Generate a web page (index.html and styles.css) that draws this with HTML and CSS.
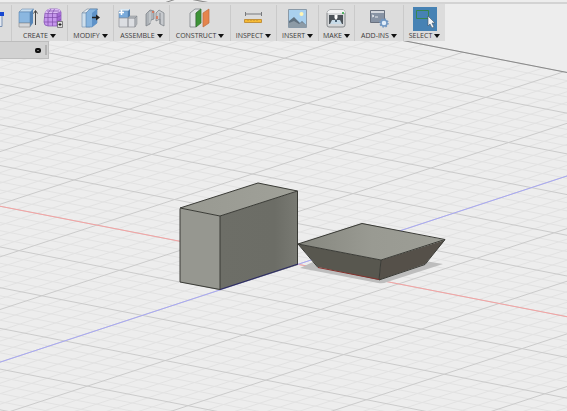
FILE: index.html
```
<!DOCTYPE html>
<html lang="en">

<head>
	<meta charset="utf-8">
	<title>Model workspace</title>
	<link rel="stylesheet" href="styles.css">
</head>

<body>
	<header class="top">
		<div class="toolbar">
			<div class="group sketch">
				<svg class="icon" viewBox="0 0 26 26"><path d="M10 9.500h13v12H10z" fill="#e4e9f1" stroke="#7a91b4"/><path d="M21 7h4v4h-4z" fill="#1747d1"/></svg>
			</div>
			<div class="group create">
				<div class="icons">
					<svg class="icon" viewBox="0 0 26 26">
						<path d="M5 7l3-3h12l-3 3z" fill="#c5dcef" stroke="#6f8fae" stroke-width=".6"/>
						<path d="M5 7h11v11H5z" fill="#8bb7e0" stroke="#5d87b3" stroke-width=".6"/>
						<path d="M16 7l3-3v14l-3 4z" fill="#5585b8"/>
						<path d="M5 18h11v4H5z" fill="#d4d6d9" stroke="#888" stroke-width=".6"/>
						<path d="M21.500 20V6M19.500 8.500l2-3 2 3" fill="none" stroke="#444"/>
					</svg>
					<svg class="icon" viewBox="0 0 26 26">
						<path d="M5 8q2-4 5-4h7q3 0 4 3v9q-1 4-4 5H8q-4 0-4-4z" fill="#c596ec" stroke="#8a5cb8" stroke-width=".8"/>
						<path d="M5 8q2-4 5-4h7q3 0 4 3l-4 2H5z" fill="#dcbdf5"/>
						<path d="M17 9l4-2v9q-1 4-4 5z" fill="#a368d3"/>
						<path d="M8 8v13M12.500 8v13M17 8v13M4 12.500h13l4-2M4 17h13l4-3M5 8.500h12l4-2M8 8l3-4M12.500 8l2-4M7 6h12" fill="none" stroke="#7e4cab" stroke-width=".7"/>
						<path d="M17.500 16.500h5v6h-5z" fill="#ddd" stroke="#666" stroke-width=".8"/>
						<path d="M18.500 19.500h3M20 18v3" stroke="#222"/>
					</svg>
				</div>
				<button type="button" class="menu">CREATE</button>
			</div>
			<div class="group modify">
				<div class="icons">
					<svg class="icon" viewBox="0 0 26 26">
						<path d="M4 8l5-4h11l-4 4z" fill="#e2e8ee" stroke="#789" stroke-width=".6"/>
						<path d="M4 8h8v14H4z" fill="#cfdfec" stroke="#6e8eae" stroke-width=".6"/>
						<path d="M8 8l4-4h7v14l-5 4H8z" fill="#86b4df" stroke="#5580ab" stroke-width=".6"/>
						<path d="M14 8l5-4v14l-5 4z" fill="#5e92c8"/>
						<path d="M14 12.500h5" stroke="#222" stroke-width="1.500"/>
						<path d="M18 9.500l4 3-4 3z" fill="#222"/>
					</svg>
				</div>
				<button type="button" class="menu">MODIFY</button>
			</div>
			<div class="group assemble">
				<div class="icons">
					<svg class="icon" viewBox="0 0 26 26">
						<path d="M3 6l2-2h9l-2 2z" fill="#d7e8f5"/>
						<path d="M3 6h9v7H3z" fill="#79aadb" stroke="#6b8eb2" stroke-width=".6"/>
						<path d="M12 6l2-2v7l-2 2z" fill="#527fae"/>
						<path d="M3 13h9v9H3zM12 13h7v9h-7z" fill="#dcdee2" stroke="#8d9196" stroke-width=".7"/>
						<path d="M12 13l2-2h7l-2 2zM19 13l2-2v8l-2 3z" fill="#b4b8bd" stroke="#85898e" stroke-width=".5"/>
						<path d="M5.500 5v5M3 7.500h5" stroke="#fff" stroke-width="1.500"/>
					</svg>
					<svg class="icon" viewBox="0 0 26 26">
						<path d="M4 9l4-4 4 1v8l-3 1-1 4-4 2z" fill="#aeb3b8" stroke="#777d83" stroke-width=".7"/>
						<path d="M8 7v11" stroke="#d5d8db"/>
						<path d="M14 8l3-3 5 3v13l-4-2v-5l-4 2z" fill="#c6c9cd" stroke="#777d83" stroke-width=".7"/>
						<path d="M18 8v11" stroke="#858a90"/>
						<path d="M11 6v2M15 11v3" stroke="#e06b49" stroke-width="1.500"/>
					</svg>
				</div>
				<button type="button" class="menu">ASSEMBLE</button>
			</div>
			<div class="group construct">
				<div class="icons">
					<svg class="icon" viewBox="0 0 26 26">
						<path d="M3 8l5-4h6l-5 4v14H3z" fill="#dfe1e4" stroke="#74797e" stroke-width=".7"/>
						<path d="M9 8l5-4v14l-5 4z" fill="#3d9338" stroke="#31722e" stroke-width=".7"/>
						<path d="M16 8l6-4v14l-6 4z" fill="#e5854d" stroke="#be6b3d" stroke-width=".7"/>
					</svg>
				</div>
				<button type="button" class="menu">CONSTRUCT</button>
			</div>
			<div class="group inspect">
				<div class="icons">
					<svg class="icon" viewBox="0 0 26 26">
						<path d="M4.500 7v4M20.500 7v4M5 9h16" stroke="#77797c"/>
						<path d="M3.500 14.500h17v3h-17z" fill="#f6bb35" stroke="#c2913c"/>
						<path d="M7 15v1M10 15v1M13 15v1M16 15v1" stroke="#9b7028" stroke-width=".6"/>
					</svg>
				</div>
				<button type="button" class="menu">INSPECT</button>
			</div>
			<div class="group insert">
				<div class="icons">
					<svg class="icon" viewBox="0 0 26 26">
						<path d="M3.500 4.500h18v18h-18z" fill="#a9d0ee" stroke="#8a9aa8"/>
						<circle cx="16.500" cy="9" r="2" fill="#fff5b3"/>
						<path d="M4 16l5-4 6 6 2-2 4 4v2H4z" fill="#60717f"/>
						<path d="M4 18l5-2 5 3 3-2 4 3v2H4z" fill="#8d9ba6"/>
					</svg>
				</div>
				<button type="button" class="menu">INSERT</button>
			</div>
			<div class="group make">
				<div class="icons">
					<svg class="icon" viewBox="0 0 26 26">
						<path d="M6 5h13q2 0 2 3v12q0 2-2 2H5q-2 0-2-2V8q1-3 3-3z" fill="#d5d7d9" stroke="#74777a" stroke-width=".8"/>
						<path d="M6 5h13q2 0 2 3H3q1-3 3-3z" fill="#f2f3f4"/>
						<path d="M5 10h14v9H5z" fill="#4c5359"/>
						<path d="M8 15h8l2 4H6z" fill="#c8dbe8"/>
						<path d="M10.500 10h3v3l-1.500 2-1.500-2z" fill="#fff"/>
						<path d="M11 15h2v2h-2z" fill="#4d6678"/>
						<circle cx="19" cy="8" r="1" fill="#26a33b"/>
					</svg>
				</div>
				<button type="button" class="menu">MAKE</button>
			</div>
			<div class="group addins">
				<div class="icons">
					<svg class="icon" viewBox="0 0 26 26">
						<path d="M4.500 5.500h14v12h-14z" fill="#8793a4" stroke="#69717f"/>
						<path d="M5 6h13v2H5z" fill="#d3d7dd"/>
						<path d="M6 10l2 1-2 1M9 12h3" fill="none" stroke="#fff" stroke-width=".8"/>
						<circle cx="18" cy="18" r="3" fill="#e1edf9" stroke="#7298c3" stroke-width="1.500"/>
						<circle cx="18" cy="18" r="4" fill="none" stroke="#7298c3" stroke-width="1.500" stroke-dasharray="1.500 1.640"/>
					</svg>
				</div>
				<button type="button" class="menu">ADD-INS</button>
			</div>
			<div class="group select">
				<div class="icons active">
					<svg class="icon" viewBox="0 0 24 24">
						<path d="M3.500 3.500h12v8h-12z" fill="none" stroke="#378651"/>
						<path d="M15 9v10l2-2 2 4 2-1-2-4h3z" fill="#f4f6f8" stroke="#456" stroke-width=".6"/>
					</svg>
				</div>
				<button type="button" class="menu">SELECT</button>
			</div>
		</div>
		<div class="browser">
			<button type="button" class="collapse" aria-label="Collapse browser"></button>
			<span class="grip"></span>
		</div>
	</header>

	<svg class="canvas" viewBox="0 0 567 411" preserveAspectRatio="xMidYMid slice">
		<defs>
			<linearGradient id="boxTop" x1="0" y1="0" x2="1" y2="0">
				<stop offset="0" stop-color="#989991"/>
				<stop offset="1" stop-color="#a0a199"/>
			</linearGradient>
			<linearGradient id="boxSide" x1="0" y1="0" x2="1" y2="0">
				<stop offset="0" stop-color="#6d6e67"/>
				<stop offset=".7" stop-color="#6c6d66"/>
				<stop offset="1" stop-color="#797a73"/>
			</linearGradient>
			<linearGradient id="trayTop" x1="0" y1="0" x2="1" y2="0">
				<stop offset="0" stop-color="#85867e"/>
				<stop offset=".5" stop-color="#999a92"/>
				<stop offset="1" stop-color="#9d9e96"/>
			</linearGradient>
		</defs>

		<!-- ground plane, one unit per major square -->
		<g transform="matrix(100.6 19.6 -77.8 25.55 298 264.3)">
			<path id="minor" class="line minor"/>
			<path id="major" class="line major"/>
			<path class="line edge" d="M-5.800 9V-6H9"/>
			<path class="line x-axis" d="M-5.800 0H9"/>
			<path class="line y-axis" d="M0-6V9"/>
		</g>

		<!-- box -->
		<path d="M180 208l78-25 40 8-78 25z" fill="url(#boxTop)"/>
		<path d="M180 208l40 8v74l-40-8z" fill="#969790"/>
		<path d="M220 216l78-25v74l-78 25z" fill="url(#boxSide)"/>
		<path class="outline" d="M220 289.500v-73.500l-40-8 78-25 39.500 8v73.500M220 216l77.500-25M180 208.500v73.500l40 7.500"/>
		<path class="hidden-axis" d="M220 289.500l78-25.500"/>

		<!-- tapered tray -->
		<path class="shadow" d="M300 268l78 15q5 1 9-1l56-18-18-3-110 0z"/>
		<path d="M298 244l83 16-2 20-61-13z" fill="#58574f"/>
		<path d="M381 260l64-20-20 24-46 16z" fill="#555049"/>
		<path d="M298 244l64-21 83 17-64 20z" fill="url(#trayTop)"/>
		<path class="outline" d="M298 244l64-20.500 83 16-64 20.500z"/>
		<path class="outline" d="M298 244l20 23.500M381 260l-2 20 46-15.500 20-25"/>
		<path class="x-edge" d="M318 267.500l61 12"/>
	</svg>

	<script>
		var step = 5, minor = "", major = "";

		// fine lines every fifth of a square, stronger ones on the whole squares
		for (var n = -30; n <= 45; n++) {
			var p = n / step, d = "";
			if (n >= -29) d += "M" + p + " -6V9";
			d += "M-5.8 " + p + "H9";
			if (n % step == 0) major += d;
			else minor += d;
		}
		document.getElementById("minor").setAttribute("d", minor);
		document.getElementById("major").setAttribute("d", major);
	</script>
</body>

</html>
```
FILE: styles.css
```
* {
	box-sizing: border-box;
	margin: 0;
	padding: 0;
}

body {
	display: grid;
	height: 100vh;
	overflow: hidden;
	background: #ededed;
	font-family: "Lucida Grande", "Open Sans", sans-serif;
}

.top,
.canvas {
	grid-area: 1 / 1;
}

.top {
	z-index: 1;
	align-self: start;
	margin-top: 2px;
	border-top: 2px solid #d3d3d3;
}

.canvas {
	display: block;
	width: 100%;
	height: 100vh;
}

.toolbar {
	display: flex;
	width: max-content;
	padding-top: 1px;
	background: #dcdcdc;
}

.group {
	display: flex;
	flex-direction: column;
	align-items: center;
	border-left: 1px solid #cacaca;
}

.icons {
	display: flex;
	height: 26px;
}

.icon {
	display: block;
	width: 26px;
	height: 26px;
}

.active {
	width: 24px;
	height: 24px;
	margin-top: 2px;
	background: #4682b4;
}

.active .icon {
	width: 24px;
	height: 24px;
}

.menu {
	display: flex;
	align-items: center;
	gap: 2px;
	height: 10px;
	border: none;
	background: none;
	color: #3a3a3a;
	font-family: inherit;
	font-size: 7px;
	line-height: 10px;
	white-space: nowrap;
}

.menu::after {
	content: "";
	border: solid transparent;
	border-width: 4px 3px 0;
	border-top-color: #111;
}

.sketch {
	width: 11px;
	padding-right: 6px;
	border: none;
	align-items: flex-end;
	overflow: hidden;
}

.create { width: 56px; }
.modify { width: 46px; }
.assemble { width: 56px; }
.construct { width: 61px; }
.inspect { width: 46px; }
.insert { width: 42px; }
.make { width: 36px; }
.addins { width: 49px; }
.select { width: 42px; }

.browser {
	display: flex;
	align-items: center;
	justify-content: flex-end;
	gap: 4px;
	width: 49px;
	height: 18px;
	padding-right: 1px;
	background: #d2d2d2;
	border: 1px solid #bdbdbd;
	border-left: none;
}

.collapse {
	width: 6px;
	height: 5px;
	border: 2px solid #111;
	border-radius: 2px;
	background: #777;
}

.grip {
	width: 2px;
	height: 10px;
	background: #b3b3b3;
}

.line {
	fill: none;
	stroke-width: 1;
	vector-effect: non-scaling-stroke;
}

.minor { stroke: #e2e2e2; }
.major { stroke: #cbcbcb; }
.edge { stroke: #8a8a8a; }
.x-axis { stroke: #f5a3a3; }
.y-axis { stroke: #a8a8f5; }

.outline {
	fill: none;
	stroke: #3a3b36;
	stroke-width: 1;
	stroke-linejoin: round;
}

.hidden-axis {
	stroke: #292963;
}

.x-edge {
	stroke: #85312c;
}

.shadow {
	fill: #bdbdbd;
}
```
